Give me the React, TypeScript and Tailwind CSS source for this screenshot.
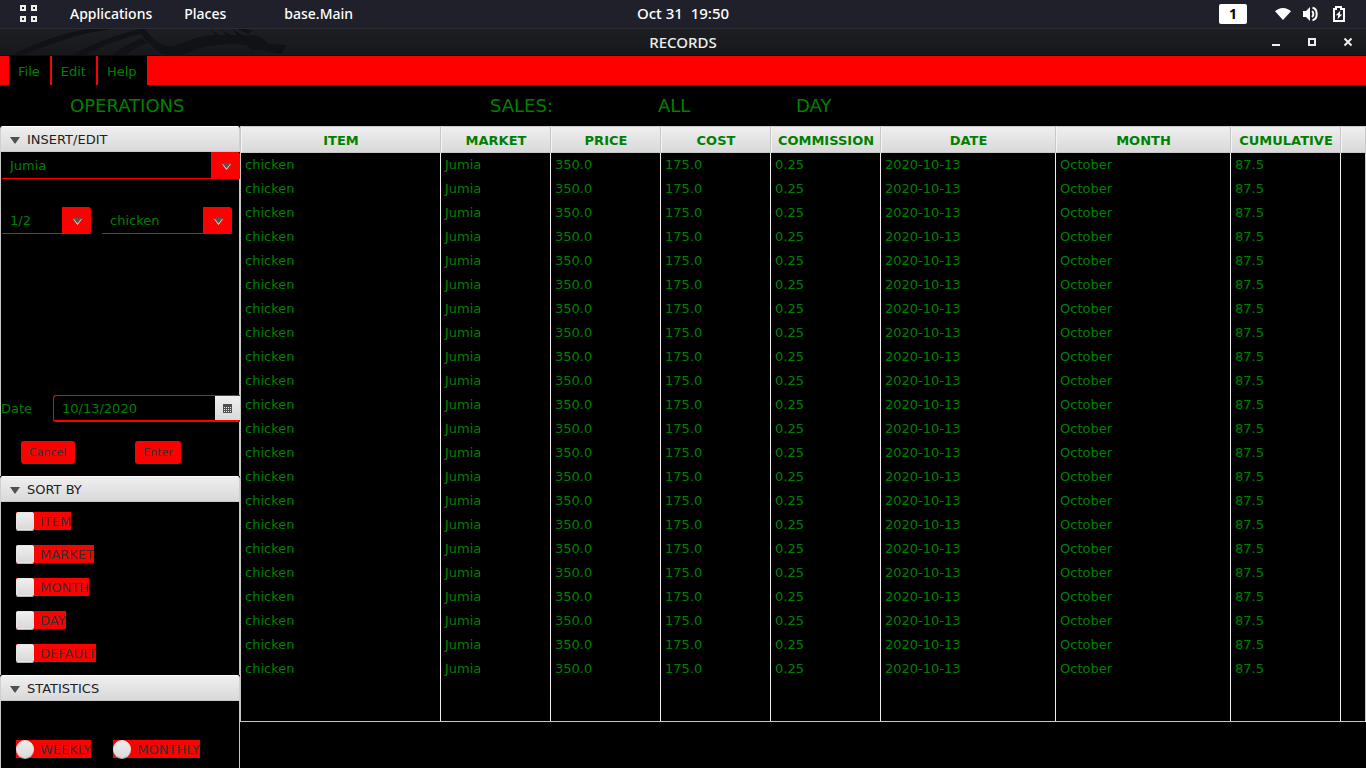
import React from 'react';

const columns = [
  { name: 'ITEM', width: 'w-[200px]' },
  { name: 'MARKET', width: 'w-[110px]' },
  { name: 'PRICE', width: 'w-[110px]' },
  { name: 'COST', width: 'w-[110px]' },
  { name: 'COMMISSION', width: 'w-[110px]' },
  { name: 'DATE', width: 'w-[175px]' },
  { name: 'MONTH', width: 'w-[175px]' },
  { name: 'CUMULATIVE', width: 'w-[110px]' },
];

const record = ['chicken', 'Jumia', '350.0', '175.0', '0.25', '2020-10-13', 'October', '87.5'];
const records = Array.from({ length: 22 }, () => record);

const metal = 'bg-linear-to-b from-[#efefef] to-[#d9d9d9]';

function TopBar() {
  return (
    <header className="grid h-7 grid-cols-3 items-center bg-[#1f2029] text-sm font-medium text-white">
      <nav className="flex items-center whitespace-nowrap">
        <button aria-label="Show applications" className="ml-5">
          <svg width="18" height="18" viewBox="0 0 18 18" fill="none" stroke="#eeeeec" strokeWidth="2" shapeRendering="crispEdges">
            <rect x="1" y="1" width="4" height="4" />
            <rect x="12" y="1" width="4" height="4" />
            <rect x="1" y="12" width="4" height="4" />
            <rect x="12" y="12" width="4" height="4" />
          </svg>
        </button>
        <button className="ml-8">Applications</button>
        <button className="ml-8">Places</button>
        <button className="ml-14 pl-0.5">base.Main</button>
      </nav>
      <time className="justify-self-center whitespace-pre text-[15px]">Oct 31  19:50</time>
      <div className="flex items-center justify-end pr-[19px]">
        <button className="mr-7 h-5 w-7 rounded-xs bg-white text-center font-bold leading-5 text-black">1</button>
        <div className="flex items-center gap-3">
          <svg width="16" height="12" viewBox="0 0 16 12" fill="#fff" aria-label="Wi-Fi">
            <path d="M8 12 0 3.2C2 1.4 4.800 0 8 0s6 1.400 8 3.200z" />
          </svg>
          <svg width="16" height="16" viewBox="0 0 16 16" fill="none" aria-label="Volume">
            <path d="M0 5h3l4-4v14l-4-4H0z" fill="#fff" />
            <path d="M9 5c1.800 1.500 1.800 4.500 0 6" stroke="#fff" strokeWidth="2" />
            <path d="M9.500 1.800c5.600 1.200 5.600 11.200 0 12.400" stroke="#fff" strokeWidth="2" />
          </svg>
          <svg width="16" height="16" viewBox="0 0 16 16" fill="none" aria-label="Battery charging">
            <path d="M3 3h2V1h5v2h3v12H3z" stroke="#fff" strokeWidth="2" />
            <path d="M9.500 4.500 4.800 9.300h2.500L6.500 13.200l4.700-4.800H8.700z" fill="#fff" />
          </svg>
        </div>
      </div>
    </header>
  );
}

function TitleBar() {
  return (
    <div className="grid h-7 grid-cols-3 items-center border-t border-b border-t-[#2b2c32] border-b-[#0c0d10] bg-linear-to-b from-[#1c1e22] to-[#17181c] text-[15px] font-medium text-[#eeeeec]">
      <svg width="290" height="26" viewBox="0 0 290 26" fill="#111216" aria-hidden="true">
        <path d="M13 26C30 17 56 5 88 0h22C76 5 46 16 24 26z" />
        <path d="M72 26C94 14 118 5 137 1l3 4C118 11 98 18 86 26z" />
        <path d="M112 26c10-8 20-13 30-17l5 5c-8 3-15 7-21 12z" />
        <path d="M137 0h8c6 9 15 17 24 17 14 0 18-9 46-11l-4-5 8 5h7l-4-5 9 5h6l-4-5 12 6c8-2 14-1 19 4l5 4 17 1-4 9-18-4-12 0-6-5c-16-2-32-1-49 4-7 2-10 5-15 6h-17C156 22 145 12 137 0z" />
        <path d="M238 0h8l7 2-5 3z" />
      </svg>
      <h1 className="justify-self-center">RECORDS</h1>
      <div className="flex items-center justify-end gap-5 pr-2.5">
        <button aria-label="Minimize">
          <svg width="16" height="16" viewBox="0 0 16 16"><path d="M4 10h8v2H4z" fill="#eeeeec" /></svg>
        </button>
        <button aria-label="Maximize">
          <svg width="16" height="16" viewBox="0 0 16 16"><path d="M5 5h6v6H5z" fill="none" stroke="#eeeeec" strokeWidth="2" /></svg>
        </button>
        <button aria-label="Close">
          <svg width="16" height="16" viewBox="0 0 16 16"><path d="m4.500 4.500 7 7m0-7-7 7" stroke="#eeeeec" strokeWidth="2" /></svg>
        </button>
      </div>
    </div>
  );
}

function Combo({ label, value, className }: { label: string; value: string; className: string }) {
  return (
    <div className={`relative h-[27px] ${className}`}>
      <select
        aria-label={label}
        defaultValue={value}
        className="h-full w-full appearance-none border-b border-[#ff0000] bg-black pt-0.5 pr-8 pl-2"
      >
        <option>{value}</option>
      </select>
      <span className="pointer-events-none absolute inset-y-0 right-0 flex w-[29px] items-center justify-center rounded-r-[3px] bg-[#ff0000] pt-px pl-0.5">
        <svg width="9" height="7" viewBox="0 0 9 7">
          <path d="M0 1h9L4.500 7z" fill="#ddd" />
          <path d="M0 0h9L4.500 5.500z" fill="#555" />
        </svg>
      </span>
    </div>
  );
}

function Section({ title, className, children }: { title: string; className: string; children: React.ReactNode }) {
  return (
    <section className={`flex flex-col ${className}`}>
      <h2>
        <button
          aria-expanded="true"
          className={`flex h-[26px] w-full items-center gap-[7px] rounded-t-[3px] border border-t-white border-x-[#d0d0d0] border-b-[#c8c8c8] pt-0.5 pl-[9px] text-[#222] ${metal}`}
        >
          <svg width="10" height="7" viewBox="0 0 10 7" fill="#505050"><path d="M0 0h10L5 7z" /></svg>
          {title}
        </button>
      </h2>
      <div className="flex-1 border-x border-[#c8c8c8]">{children}</div>
    </section>
  );
}

function Choice({ type, label }: { type: 'checkbox' | 'radio'; label: string }) {
  return (
    <label className="flex h-[18px] w-fit items-center gap-1.5 bg-[#ff0000] text-[#333]">
      <input
        type={type}
        name={type === 'radio' ? 'period' : label}
        className={`size-[18px] appearance-none border border-[#e6e6e6] shadow-[0_1px_0_#b5b5b5] ${metal} ${type === 'radio' ? 'rounded-full' : 'rounded-[2px]'}`}
      />
      <span className="pt-0.5">{label}</span>
    </label>
  );
}

function Sidebar() {
  return (
    <aside className="flex w-60 shrink-0 flex-col">
      <Section title="INSERT/EDIT" className="h-[350px]">
        <Combo label="Market" value="Jumia" className="-mr-px ml-px" />
        <div className="mt-7 ml-px flex gap-[11px]">
          <Combo label="Quantity" value="1/2" className="w-[89px]" />
          <Combo label="Item" value="chicken" className="w-[130px]" />
        </div>
        <div className="-mr-px mt-[161px] flex items-center">
          <label htmlFor="date" className="w-[52px] shrink-0">Date</label>
          <div className="flex h-[27px] flex-1 rounded-l-[3px] border-y border-l border-b-2 border-[#ff0000]">
            <input id="date" defaultValue="10/13/2020" className="w-0 flex-1 bg-transparent pt-0.5 pl-2" />
            <button aria-label="Choose date" className={`flex w-[25px] items-center justify-center ${metal}`}>
              <svg width="9" height="9" viewBox="0 0 9 9" shapeRendering="crispEdges">
                <path d="M0 0h9v9H0z" fill="#505050" />
                <path d="M1 3h1v1H1zM3 3h1v1H3zM5 3h1v1H5zM7 3h1v1H7zM1 5h1v1H1zM3 5h1v1H3zM5 5h1v1H5zM7 5h1v1H7zM1 7h1v1H1zM3 7h1v1H3zM5 7h1v1H5zM7 7h1v1H7z" fill="#ececec" />
              </svg>
            </button>
          </div>
        </div>
        <div className="mt-[19px] ml-5 flex gap-[60px] text-[11px] text-[#333]">
          <button className="h-[23px] rounded-[3px] bg-[#ff0000] pr-[9px] pl-2">Cancel</button>
          <button className="h-[23px] rounded-[3px] bg-[#ff0000] px-2">Enter</button>
        </div>
      </Section>
      <Section title="SORT BY" className="h-[199px]">
        <div className="flex flex-col gap-[15px] pt-2.5 pl-[15px]">
          {['ITEM', 'MARKET', 'MONTH', 'DAY', 'DEFAULT'].map((label) => (
            <Choice key={label} type="checkbox" label={label} />
          ))}
        </div>
      </Section>
      <Section title="STATISTICS" className="flex-1">
        <div className="flex gap-[22px] pt-[39px] pb-2.5 pl-[15px]">
          <Choice type="radio" label="WEEKLY" />
          <Choice type="radio" label="MONTHLY" />
        </div>
      </Section>
    </aside>
  );
}

function RecordsTable() {
  return (
    <main className="min-w-0 flex-1">
      <table className="w-full table-fixed border-separate border-spacing-0 border-r border-b border-l border-[#c8c8c8]">
        <thead>
          <tr>
            {columns.map((c) => (
              <th
                key={c.name}
                className={`h-[27px] border border-t-[#c8c8c8] border-r-[#c8c8c8] border-b-[#c8c8c8] border-l-[#f4f4f4] px-0 pt-0.5 pb-0 text-center font-bold ${metal} ${c.width}`}
              >
                {c.name}
              </th>
            ))}
            <td className={`h-[27px] border border-r-0 border-t-[#c8c8c8] border-b-[#c8c8c8] border-l-[#f4f4f4] p-0 ${metal}`} />
          </tr>
        </thead>
        <tbody>
          {records.map((row, i) => (
            <tr key={i}>
              {row.map((cell, j) => (
                <td key={j} className="h-6 border-r border-[#eee] py-0 pr-0 pl-1">{cell}</td>
              ))}
              <td />
            </tr>
          ))}
          <tr>
            {columns.map((c) => (
              <td key={c.name} className="h-10 border-r border-[#eee]" />
            ))}
            <td />
          </tr>
        </tbody>
      </table>
    </main>
  );
}

export default function App() {
  return (
    <div className="flex min-h-screen flex-col bg-black font-['DejaVu_Sans',sans-serif] text-[13px] leading-4 text-[#008000]">
      <div className="font-['Noto_Sans',sans-serif]">
        <TopBar />
        <TitleBar />
      </div>
      <nav className="flex h-[29px] gap-0.5 bg-[#ff0000] pl-[9px]">
        {['File', 'Edit', 'Help'].map((m) => (
          <button key={m} className="bg-black pt-0.5 pr-2.5 pl-[9px]">{m}</button>
        ))}
      </nav>
      <div className="flex h-[41px] items-center text-[18px]">
        <h2 className="w-[490px] pl-[70px]">OPERATIONS</h2>
        <span className="w-[168px]">SALES:</span>
        <span className="w-[138px]">ALL</span>
        <span>DAY</span>
      </div>
      <div className="flex flex-1">
        <Sidebar />
        <RecordsTable />
      </div>
    </div>
  );
}
